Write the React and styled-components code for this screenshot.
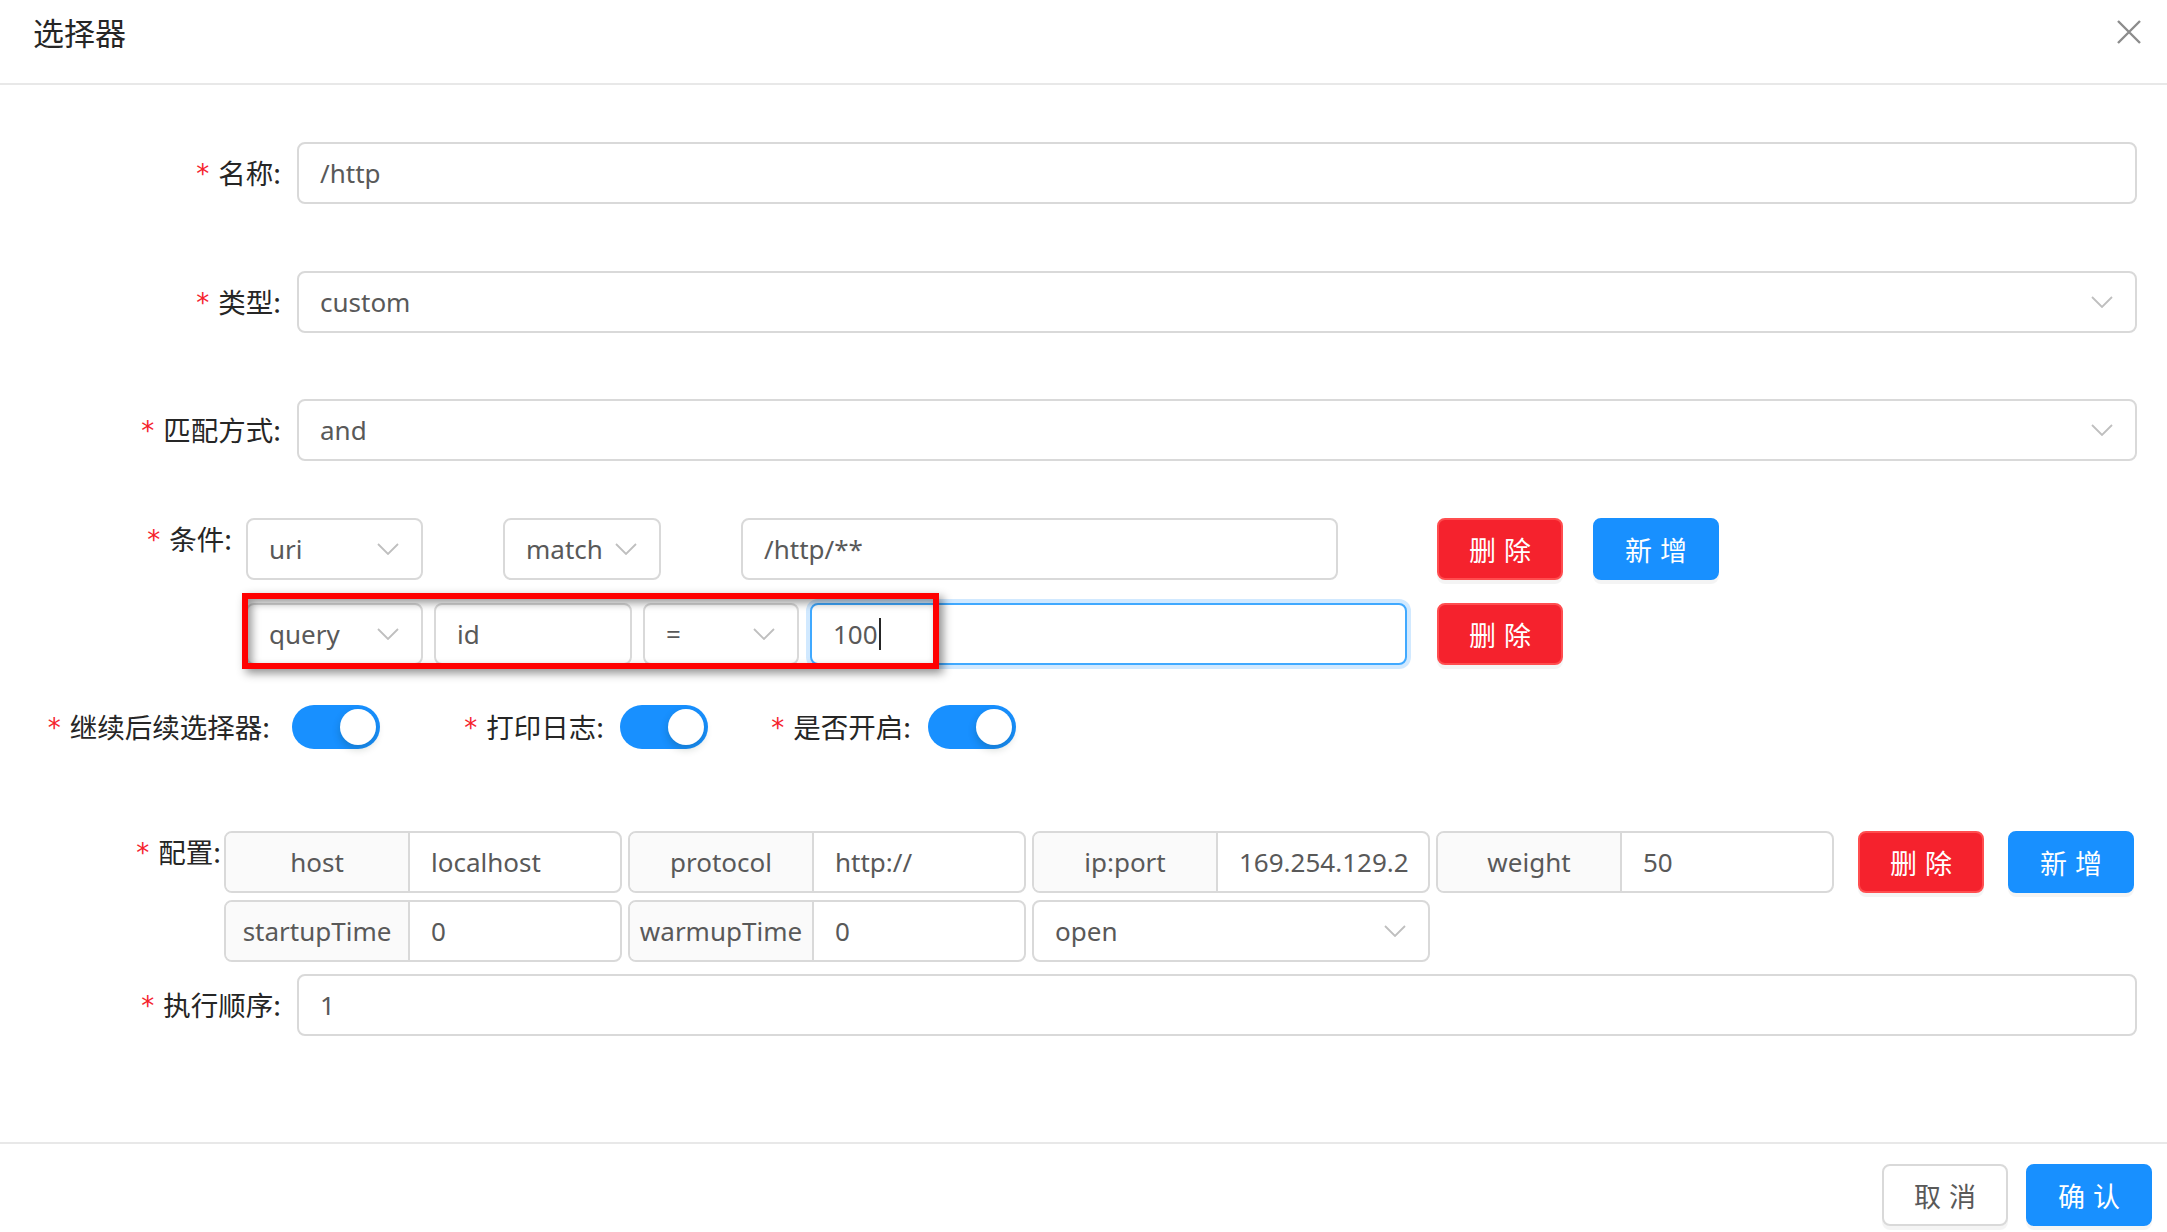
import React from "react";
import styled, { createGlobalStyle, css } from "styled-components";

const GlobalStyle = createGlobalStyle`
  html, body {
    margin: 0;
    padding: 0;
    background: #fff;
    overflow: hidden;
  }
  body {
    font-family: "Noto Sans", "Noto Sans CJK SC", sans-serif;
    font-size: 26px;
    color: #262626;
  }
  * {
    box-sizing: border-box;
  }
`;

const Chevron = () => (
  <svg width="22" height="12" viewBox="0 0 22 12" fill="none">
    <polyline points="1,1 11,11 21,1" stroke="#bfbfbf" strokeWidth="1.8" />
  </svg>
);

const CloseIcon = () => (
  <svg width="24" height="24" viewBox="0 0 24 24" fill="none">
    <path d="M1 1 L23 23 M23 1 L1 23" stroke="#8c8c8c" strokeWidth="2.4" />
  </svg>
);

const App = () => {
  return (
    <Modal>
      <GlobalStyle />
      <Header>
        <Title>选择器</Title>
        <Close>
          <CloseIcon />
        </Close>
      </Header>

      <Body>
        <FormRow>
          <Label>
            <Required>*</Required>名称:
          </Label>
          <Field $grow>/http</Field>
        </FormRow>

        <FormRow $mt={67}>
          <Label>
            <Required>*</Required>类型:
          </Label>
          <Select $grow>
            <span>custom</span>
            <Chevron />
          </Select>
        </FormRow>

        <FormRow $mt={66}>
          <Label>
            <Required>*</Required>匹配方式:
          </Label>
          <Select $grow>
            <span>and</span>
            <Chevron />
          </Select>
        </FormRow>

        <FormRow $mt={57} $top>
          <Label $w={246} $pr={14}>
            <Required>*</Required>条件:
          </Label>
          <Stack $gap={23}>
            <CondRow>
              <Select $w={177}>
                <span>uri</span>
                <Chevron />
              </Select>
              <Select $w={158} $ml={80}>
                <span>match</span>
                <Chevron />
              </Select>
              <Field $w={597} $ml={80}>/http/**</Field>
              <Button $kind="danger" $ml={99}>删除</Button>
              <Button $kind="primary" $ml={30}>新增</Button>
            </CondRow>
            <CondRow>
              <Select $w={177}>
                <span>query</span>
                <Chevron />
              </Select>
              <Field $w={198} $ml={11}>id</Field>
              <Select $w={156} $ml={11}>
                <span>=</span>
                <Chevron />
              </Select>
              <Field $w={597} $ml={11} $focus>
                100<Caret />
              </Field>
              <Button $kind="danger" $ml={30}>删除</Button>
              <Highlight />
            </CondRow>
          </Stack>
        </FormRow>

        <FormRow $mt={40}>
          <Label $w={292} $pr={22}>
            <Required>*</Required>继续后续选择器:
          </Label>
          <Toggle />
          <Label $w={240} $pr={16}>
            <Required>*</Required>打印日志:
          </Label>
          <Toggle />
          <Label $w={220} $pr={17}>
            <Required>*</Required>是否开启:
          </Label>
          <Toggle />
        </FormRow>

        <FormRow $mt={82} $top>
          <Label $w={224} $pr={3}>
            <Required>*</Required>配置:
          </Label>
          <Stack $gap={7}>
            <CondRow>
              <Group>
                <Addon>host</Addon>
                <GroupInput>localhost</GroupInput>
              </Group>
              <Group $ml={6}>
                <Addon>protocol</Addon>
                <GroupInput>http://</GroupInput>
              </Group>
              <Group $ml={6}>
                <Addon>ip:port</Addon>
                <GroupInput>169.254.129.2</GroupInput>
              </Group>
              <Group $ml={6}>
                <Addon>weight</Addon>
                <GroupInput>50</GroupInput>
              </Group>
              <Button $kind="danger" $ml={24}>删除</Button>
              <Button $kind="primary" $ml={24}>新增</Button>
            </CondRow>
            <CondRow>
              <Group>
                <Addon>startupTime</Addon>
                <GroupInput>0</GroupInput>
              </Group>
              <Group $ml={6}>
                <Addon>warmupTime</Addon>
                <GroupInput>0</GroupInput>
              </Group>
              <Select $w={398} $ml={6}>
                <span>open</span>
                <Chevron />
              </Select>
            </CondRow>
          </Stack>
        </FormRow>

        <FormRow $mt={12}>
          <Label>
            <Required>*</Required>执行顺序:
          </Label>
          <Field $grow>1</Field>
        </FormRow>
      </Body>

      <Footer>
        <Button $kind="default">取消</Button>
        <Button $kind="primary">确认</Button>
      </Footer>
    </Modal>
  );
};

const Modal = styled.div`
  width: 100%;
  height: 1232px;
  display: flex;
  flex-direction: column;
  background: #fff;
`;

const Header = styled.div`
  height: 85px;
  flex: none;
  display: flex;
  align-items: flex-start;
  justify-content: space-between;
  padding: 12px 26px 0 33px;
  border-bottom: 2px solid #e8e8e8;
`;

const Title = styled.div`
  font-family: "Noto Sans CJK SC", sans-serif;
  font-size: 31px;
  line-height: 40px;
  color: #262626;
`;

const Close = styled.div`
  display: flex;
  align-items: center;
  height: 40px;
`;

const Body = styled.div`
  flex: 1;
  padding: 57px 30px 0 0;
  display: flex;
  flex-direction: column;
`;

const FormRow = styled.div`
  display: flex;
  align-items: ${(p) => (p.$top ? "flex-start" : "center")};
  margin-top: ${(p) => p.$mt || 0}px;
`;

const Label = styled.label`
  flex: none;
  width: ${(p) => p.$w || 297}px;
  padding-right: ${(p) => (p.$pr === undefined ? 16 : p.$pr)}px;
  text-align: right;
  line-height: 40px;
  font-family: "Noto Sans CJK SC", sans-serif;
  font-size: 27.5px;
  color: #262626;
  white-space: nowrap;
`;

const Required = styled.span`
  display: inline-block;
  margin-right: 9px;
  font-family: "DejaVu Sans", sans-serif;
  font-size: 26px;
  color: #f5222d;
  vertical-align: 1px;
`;

const Stack = styled.div`
  display: flex;
  flex-direction: column;
  gap: ${(p) => p.$gap}px;
`;

const CondRow = styled.div`
  position: relative;
  display: flex;
  align-items: center;
`;

const Field = styled.div`
  position: relative;
  height: 62px;
  flex: ${(p) => (p.$grow ? "1" : "none")};
  width: ${(p) => (p.$w ? `${p.$w}px` : "auto")};
  margin-left: ${(p) => p.$ml || 0}px;
  display: flex;
  align-items: center;
  padding: 0 21px;
  border: 2px solid #d9d9d9;
  border-radius: 8px;
  background: #fff;
  color: #595959;
  font-size: 26px;
  white-space: nowrap;
  overflow: hidden;

  ${(p) =>
    p.$focus &&
    css`
      border-color: #40a9ff;
      box-shadow: 0 0 0 4px rgba(24, 144, 255, 0.2);
      overflow: visible;
    `}
`;

const Select = styled(Field)`
  justify-content: space-between;
  padding-right: 22px;

  svg {
    flex: none;
    margin-left: 8px;
  }
`;

const Caret = styled.span`
  display: inline-block;
  width: 2px;
  height: 32px;
  margin-left: 1px;
  background: #262626;
`;

const Highlight = styled.div`
  position: absolute;
  left: -4px;
  top: -10px;
  width: 697px;
  height: 76px;
  border: 6px solid #ff0000;
  box-shadow: 4px 4px 9px rgba(0, 0, 0, 0.45),
    inset 4px 4px 9px rgba(0, 0, 0, 0.4);
  pointer-events: none;
`;

const Button = styled.button`
  flex: none;
  width: 126px;
  height: 62px;
  margin-left: ${(p) => p.$ml || 0}px;
  border-radius: 8px;
  font-family: "Noto Sans CJK SC", sans-serif;
  font-size: 27px;
  letter-spacing: 0.3em;
  text-indent: 0.3em;
  cursor: pointer;
  box-shadow: 0 4px 0 rgba(0, 0, 0, 0.045);

  ${(p) =>
    p.$kind === "danger" &&
    css`
      background: #f5222d;
      border: 2px solid #ff4d4f;
      color: #fff;
    `}
  ${(p) =>
    p.$kind === "primary" &&
    css`
      background: #1890ff;
      border: 2px solid #1890ff;
      color: #fff;
    `}
  ${(p) =>
    p.$kind === "default" &&
    css`
      background: #fff;
      border: 2px solid #d9d9d9;
      color: #595959;
    `}
`;

const ToggleTrack = styled.div`
  flex: none;
  position: relative;
  width: 88px;
  height: 44px;
  border-radius: 22px;
  background: #1890ff;
`;

const ToggleKnob = styled.span`
  position: absolute;
  top: 4px;
  right: 4px;
  width: 36px;
  height: 36px;
  border-radius: 50%;
  background: #fff;
  box-shadow: 0 4px 8px rgba(0, 35, 11, 0.2);
`;

const Toggle = () => (
  <ToggleTrack>
    <ToggleKnob />
  </ToggleTrack>
);

const Group = styled.div`
  flex: none;
  display: flex;
  width: 398px;
  height: 62px;
  margin-left: ${(p) => p.$ml || 0}px;
  border: 2px solid #d9d9d9;
  border-radius: 8px;
  overflow: hidden;
  font-size: 26px;
`;

const Addon = styled.div`
  flex: none;
  width: 184px;
  display: flex;
  align-items: center;
  justify-content: center;
  background: #fafafa;
  border-right: 2px solid #d9d9d9;
  color: #595959;
  white-space: nowrap;
  overflow: hidden;
`;

const GroupInput = styled.div`
  flex: 1;
  display: flex;
  align-items: center;
  padding: 0 21px;
  color: #595959;
  white-space: nowrap;
  overflow: hidden;
`;

const Footer = styled.div`
  flex: none;
  height: 90px;
  display: flex;
  align-items: flex-start;
  justify-content: flex-end;
  gap: 18px;
  padding: 20px 15px 0;
  border-top: 2px solid #e8e8e8;
`;

export default App;
